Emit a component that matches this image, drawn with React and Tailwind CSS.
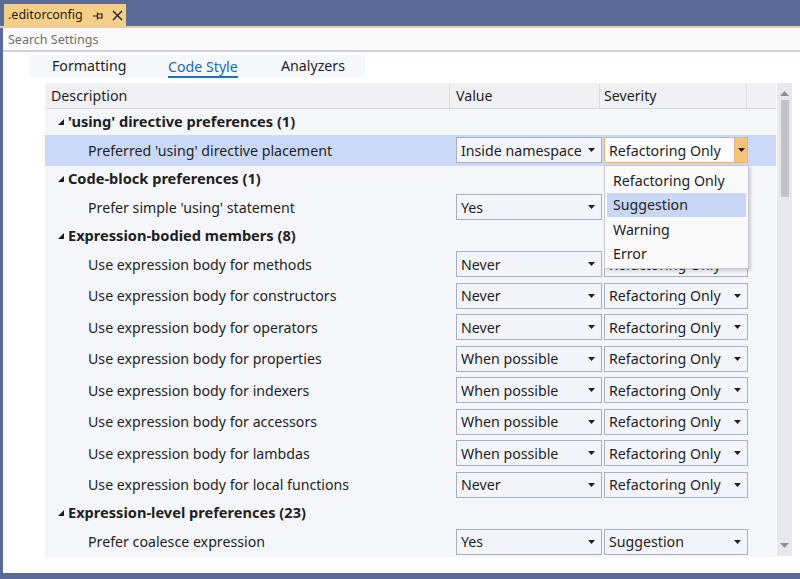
import React from "react";

const font = { fontFamily: '"Noto Sans", "Open Sans", sans-serif' };

const groups = [
  {
    title: "'using' directive preferences (1)",
    items: [{ label: "Preferred 'using' directive placement", value: "Inside namespace", severity: "Refactoring Only", active: true }],
  },
  {
    title: "Code-block preferences (1)",
    items: [{ label: "Prefer simple 'using' statement", value: "Yes", severity: "Suggestion" }],
  },
  {
    title: "Expression-bodied members (8)",
    items: [
      { label: "Use expression body for methods", value: "Never", severity: "Refactoring Only" },
      { label: "Use expression body for constructors", value: "Never", severity: "Refactoring Only" },
      { label: "Use expression body for operators", value: "Never", severity: "Refactoring Only" },
      { label: "Use expression body for properties", value: "When possible", severity: "Refactoring Only" },
      { label: "Use expression body for indexers", value: "When possible", severity: "Refactoring Only" },
      { label: "Use expression body for accessors", value: "When possible", severity: "Refactoring Only" },
      { label: "Use expression body for lambdas", value: "When possible", severity: "Refactoring Only" },
      { label: "Use expression body for local functions", value: "Never", severity: "Refactoring Only" },
    ],
  },
  {
    title: "Expression-level preferences (23)",
    items: [{ label: "Prefer coalesce expression", value: "Yes", severity: "Suggestion" }],
  },
];

const Caret = ({ className = "" }) => (
  <svg width="7" height="4" viewBox="0 0 7 4" className={className}>
    <polygon points="0,0 7,0 3.5,4" fill="#1e1e1e" />
  </svg>
);

const Combo = ({ text, width, focused }) => {
  if (focused) {
    return (
      <div className={`${width} h-[26px] flex border border-[#e2b676] bg-white`}>
        <div className="flex-1 flex items-center pl-[4px] text-[14.2px] text-[#1e1e1e] whitespace-nowrap overflow-hidden">{text}</div>
        <div className="w-[13px] flex items-center justify-center bg-[#f5c47c] border-l border-[#e2b676]">
          <Caret />
        </div>
      </div>
    );
  }
  return (
    <div className={`${width} h-[26px] flex items-center border border-[#a9afc4] bg-[#f3f5fa] pl-[4px] pr-[6px]`}>
      <div className="flex-1 text-[14.2px] text-[#1e1e1e] whitespace-nowrap overflow-hidden">{text}</div>
      <Caret />
    </div>
  );
};

const Expander = () => (
  <svg width="6" height="6" viewBox="0 0 6 6" className="mr-[4px]">
    <polygon points="6,0 6,6 0,6" fill="#1e1e1e" />
  </svg>
);

export default function App() {
  return (
    <div className="w-[800px] h-[579px] bg-[#5b6b98] flex flex-col overflow-hidden" style={font}>
      {/* document tab strip */}
      <div className="h-[26px] flex items-end pl-[4px]">
        <div className="h-[22px] w-[122px] bg-[#f5cf87] flex items-center pl-[4px] pt-[1px] text-[12.5px] text-[#1e1e1e]">
          <span>.editorconfig</span>
          <svg width="12" height="10" viewBox="0 0 12 10" className="ml-[9px]">
            <path d="M1 5h4.5M5.5 1.5v7M5.5 3h4.5v4H5.5" stroke="#1e1e1e" strokeWidth="1.2" fill="none" />
          </svg>
          <svg width="11" height="11" viewBox="0 0 11 11" className="ml-[8px]">
            <path d="M1 1l9 9M10 1l-9 9" stroke="#1e1e1e" strokeWidth="1.4" />
          </svg>
        </div>
      </div>
      <div className="h-[2px] bg-[#e8cf9f]" />

      <div className="flex-1 ml-[3px] mb-[6px] bg-white flex flex-col overflow-hidden">
        {/* search */}
        <div className="h-[24px] bg-[#fafafa] border-b-2 border-[#ccd0e0] flex items-center pl-[5px] pt-[2px] text-[12.5px] text-[#717171]">
          Search Settings
        </div>

        <div className="flex-1 relative">
          {/* tabs */}
          <div className="mt-[3px] ml-[27px] w-[335px] h-[22px] bg-[#f6f7fb] flex items-center text-[14.2px] text-[#1e1e1e]">
            <span className="ml-[22px] w-[116px]">Formatting</span>
            <span className="w-[113px]">
              <span className="text-[#1a6bb8] border-b-2 border-[#1a72c4] leading-[19px] inline-block mt-[2px]">Code Style</span>
            </span>
            <span>Analyzers</span>
          </div>

          {/* table */}
          <div className="mt-[6px] ml-[42px] flex">
            <div className="w-[731px] flex flex-col">
              <div className="h-[26px] bg-[#f1f1f3] border-b border-[#d7d8de] flex text-[14.2px] text-[#1e1e1e] pt-[1px]">
                <div className="w-[405px] pl-[6px] flex items-center border-r border-[#dcdde3]">Description</div>
                <div className="w-[150px] pl-[6px] flex items-center border-r border-[#dcdde3]">Value</div>
                <div className="w-[147px] pl-[4px] flex items-center border-r border-[#dcdde3]">Severity</div>
                <div className="flex-1" />
              </div>
              <div className="bg-[#f5f6fa] h-[448px] overflow-hidden">
                {groups.map((g) => (
                  <React.Fragment key={g.title}>
                    <div className="h-[25.5px] flex items-center pl-[13px] text-[14.6px] font-bold text-[#1e1e1e]">
                      <Expander />
                      <span>{g.title}</span>
                    </div>
                    {g.items.map((it) => (
                      <div
                        key={it.label}
                        className={`h-[31.5px] flex items-center text-[14.2px] text-[#1e1e1e] ${it.active ? "bg-[#cad9f8]" : ""}`}
                      >
                        <div className="w-[411px] pl-[43px] whitespace-nowrap">{it.label}</div>
                        <Combo text={it.value} width="w-[146px]" />
                        <div className="w-[2px]" />
                        <Combo text={it.severity} width="w-[144px]" focused={it.active} />
                      </div>
                    ))}
                  </React.Fragment>
                ))}
              </div>
            </div>

            {/* scrollbar */}
            <div className="w-[15px] ml-[1px] h-[473px] bg-[#e9e9ed] flex flex-col items-center">
              <svg width="9" height="5" viewBox="0 0 9 5" className="mt-[8px]">
                <polygon points="0,5 9,5 4.5,0" fill="#8c8c92" />
              </svg>
              <div className="w-[8px] h-[97px] bg-[#c2c3c9] mt-[4px]" />
              <div className="flex-1" />
              <svg width="9" height="5" viewBox="0 0 9 5" className="mb-[8px]">
                <polygon points="0,0 9,0 4.5,5" fill="#8c8c92" />
              </svg>
            </div>
          </div>

          {/* severity dropdown */}
          <div className="absolute left-[601px] top-[113px] w-[145px] h-[104px] bg-[#fafafa] border border-[#c9c9cf] shadow-[2px_2px_3px_rgba(0,0,0,0.15)] p-[2px] flex flex-col text-[14.2px] text-[#1e1e1e]">
            <div className="h-[25px] flex items-center pl-[6px]">Refactoring Only</div>
            <div className="h-[25px] flex items-center pl-[6px] bg-[#c8d7f6]">Suggestion</div>
            <div className="h-[25px] flex items-center pl-[6px]">Warning</div>
            <div className="h-[25px] flex items-center pl-[6px]">Error</div>
          </div>
        </div>
      </div>
    </div>
  );
}
